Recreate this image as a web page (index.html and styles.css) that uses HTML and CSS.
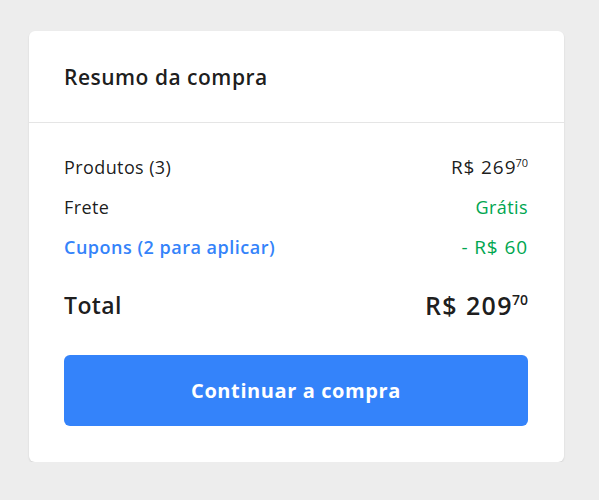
FILE: index.html
```html
<!DOCTYPE html>
<html lang="pt-BR">
<head>
  <meta charset="UTF-8" />
  <meta name="viewport" content="width=device-width, initial-scale=1.0"/>
  <title>Resumo da compra</title>
  <link rel="stylesheet" href="styles.css">
</head>
<body>

<div class="summary-card">
  <div class="summary-header">
    <h2 class="summary-title">Resumo da compra</h2>
  </div>

  <div class="summary-body">
    <div class="summary-row">
      <span>Produtos (3)</span>
      <span class="price">R$ 269<sup>70</sup></span>
    </div>
    <div class="summary-row">
      <span>Frete</span>
      <span class="free">Grátis</span>
    </div>
    <div class="summary-row">
      <a class="coupons" href="#">Cupons (2 para aplicar)</a>
      <span class="free price">- R$ 60</span>
    </div>

    <div class="summary-row total">
      <span>Total</span>
      <span class="price">R$ 209<sup>70</sup></span>
    </div>

    <button class="btn-continue">Continuar a compra</button>
  </div>
</div>

</body>
</html>
```

FILE: styles.css
```css
body {
  margin: 0;
  padding: 31px 35px 0 29px;
  background: #ededed;
  font-family: "Open Sans", "Lato", sans-serif;
  color: rgba(0, 0, 0, 0.9);
}

.summary-card {
  width: 535px;
  background: #fff;
  border-radius: 6px;
  box-shadow: 0 1px 2px rgba(0, 0, 0, 0.12);
}

.summary-header {
  height: 91px;
  display: flex;
  align-items: center;
  padding: 0 35px;
  border-bottom: 1px solid #e5e5e5;
}

.summary-title {
  margin: 0;
  font-size: 21px;
  font-weight: 600;
  letter-spacing: 0.5px;
}

.summary-body {
  padding: 24px 36px 36px 35px;
}

.summary-row {
  height: 40px;
  display: flex;
  align-items: center;
  justify-content: space-between;
  font-size: 18px;
  letter-spacing: 0.4px;
}

.summary-row .price {
  font-size: 19px;
  letter-spacing: 0.9px;
}

.summary-row sup {
  font-size: 11px;
  letter-spacing: 0;
  margin-left: -1px;
  vertical-align: 7px;
  line-height: 0;
}

.free {
  color: #00a650;
}

.coupons {
  color: #3483fa;
  font-weight: 600;
  letter-spacing: 0.5px;
  text-decoration: none;
}

.summary-row.total {
  height: 32px;
  margin-top: 22px;
  font-size: 23px;
  font-weight: 600;
}

.summary-row.total .price {
  font-size: 25px;
  letter-spacing: 1.4px;
}

.summary-row.total sup {
  font-size: 14px;
  vertical-align: 10px;
}

.btn-continue {
  display: block;
  width: 100%;
  height: 71px;
  margin-top: 34px;
  border: none;
  border-radius: 6px;
  background: #3483fa;
  color: #fff;
  font-family: inherit;
  font-size: 20px;
  font-weight: 700;
  letter-spacing: 0.6px;
  cursor: pointer;
}
```
